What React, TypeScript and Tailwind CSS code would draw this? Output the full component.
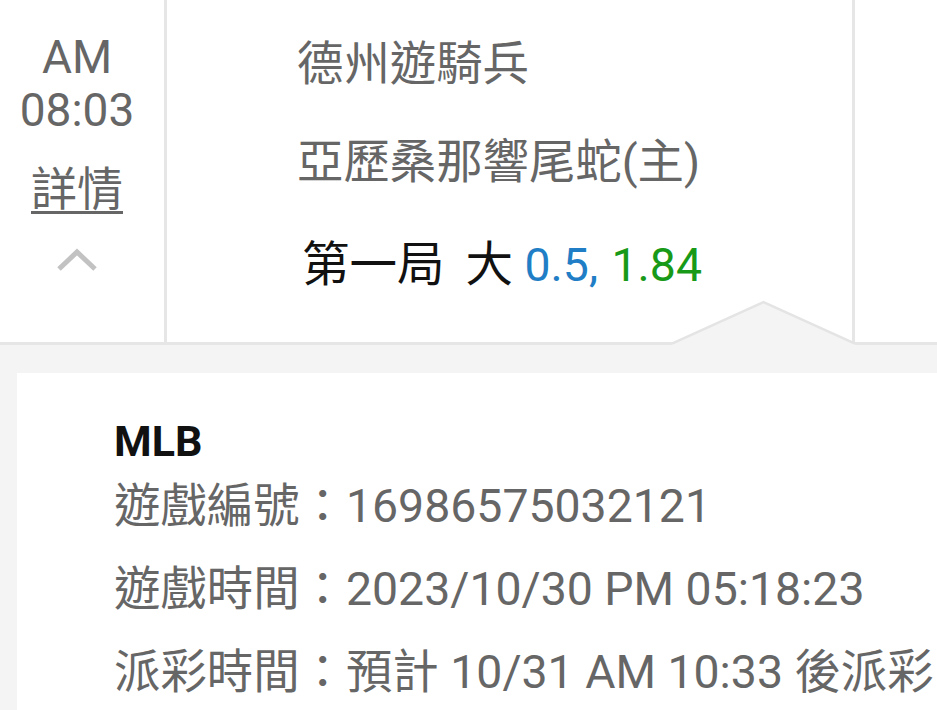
import React from 'react'

const FONT = "font-[Roboto,'Noto_Sans_CJK_TC',sans-serif]"

function ChevronUp(): React.JSX.Element {
  return (
    <svg width="42" height="24" viewBox="0 0 42 24" className="mt-[32px]">
      <polyline points="3,21 21,4 39,21" fill="none" stroke="#c2c2c2" strokeWidth="5" />
    </svg>
  )
}

/** Pointer that ties the open detail panel to its row. */
function Notch(): React.JSX.Element {
  return (
    <svg
      width="183"
      height="45"
      viewBox="0 0 183 45"
      className="absolute left-[672px] top-[300px]"
    >
      <polygon points="0,43 91.5,2 183,43 183,45 0,45" fill="#f4f4f4" />
      <polyline points="0,43.5 91.5,2 183,43.5" fill="none" stroke="#e4e4e4" strokeWidth="2.5" />
    </svg>
  )
}

export default function App(): React.JSX.Element {
  return (
    <div lang="zh-Hant-TW" className={`${FONT} h-[710px] w-[937px] overflow-hidden bg-white`}>
      {/* bet row */}
      <div className="relative flex h-[345px] border-b-[3px] border-[#e6e6e6]">
        <div className="flex w-[167px] shrink-0 flex-col items-center border-r-[3px] border-[#e6e6e6] pr-[10px] pt-[31px] text-[46px] text-[#666]">
          <div className="h-[53px] leading-[53px]">AM</div>
          <div className="h-[53px] leading-[53px]">08:03</div>
          <div className="mt-[26px] h-[53px] leading-[53px] underline underline-offset-[6px] decoration-[3px]">
            詳情
          </div>
          <ChevronUp />
        </div>

        <div className="w-[688px] shrink-0 border-r-[3px] border-[#e6e6e6] pl-[130px] pt-[15px] text-[46.4px]">
          <div className="h-[98px] leading-[98px] text-[#666]">德州遊騎兵</div>
          <div className="h-[98px] leading-[98px] text-[#666]">亞歷桑那響尾蛇(主)</div>
          <div className="ml-[5px] mt-[5px] h-[98px] leading-[98px] text-[#111]">
            <span className="text-[47.5px]">第一局</span>
            <span className="ml-[21px] text-[47.5px]">大</span>{' '}
            <span className="text-[#1f7ec5]">0.5,</span>{' '}
            <span className="ml-[2px] text-[#189a18]">1.84</span>
          </div>
        </div>

        <Notch />
      </div>

      {/* detail panel */}
      <div className="flex h-[365px] bg-[#f4f4f4] pt-[28px]">
        <div className="ml-[17px] flex-1 bg-white pl-[97px] pt-[45px]">
          <div className="h-[47px] text-[43px] font-bold leading-[47px] text-[#111]">MLB</div>
          <div className="text-[46.4px] text-[#666]">
            <div className="h-[83px] leading-[83px] whitespace-nowrap">遊戲編號：16986575032121</div>
            <div className="h-[83px] leading-[83px] whitespace-nowrap">
              遊戲時間：2023/10/30 PM 05:18:23
            </div>
            <div className="h-[83px] leading-[83px] whitespace-nowrap">
              派彩時間：預計 10/31 AM 10:33 後派彩
            </div>
          </div>
        </div>
      </div>
    </div>
  )
}
